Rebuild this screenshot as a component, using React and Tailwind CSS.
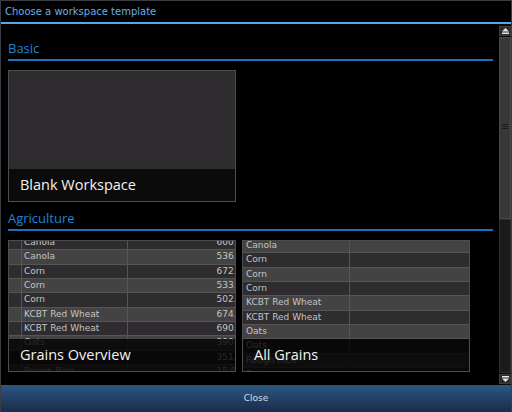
import React from "react";

const dv = { fontFamily: '"DejaVu Sans", Verdana, sans-serif' };
const os = { fontFamily: '"Open Sans", "DejaVu Sans", sans-serif' };

const overviewRows = [
  ["Canola", "600.70"],
  ["Canola", "536.40"],
  ["Corn", "672.25"],
  ["Corn", "533.50"],
  ["Corn", "502.75"],
  ["KCBT Red Wheat", "674.50"],
  ["KCBT Red Wheat", "690.25"],
  ["Oats", "390.50"],
  ["Oats", "351.25"],
  ["Rough Rice", "15.065"],
];

const allRows = [
  "Canola",
  "Corn",
  "Corn",
  "Corn",
  "KCBT Red Wheat",
  "KCBT Red Wheat",
  "Oats",
  "Oats",
  "Rough Rice",
  "Soybeans",
];

function SectionHeading({ children, className }) {
  return (
    <div
      className={`text-[13px] leading-[16px] text-[#2383d6] pb-[3px] border-b-2 border-[#1d6fb8] ${className}`}
      style={os}
    >
      {children}
    </div>
  );
}

function Label({ children, overlay }) {
  return (
    <div
      className={`h-[32px] flex items-center pl-[11px] text-[14.5px] text-[#f2f2f2] ${
        overlay ? "absolute left-0 right-0 bottom-0 bg-black/80" : "bg-[#0b0b0b]"
      }`}
      style={os}
    >
      {children}
    </div>
  );
}

function OverviewCard() {
  return (
    <div className="relative w-[228px] h-[132px] border border-[#4d4d4d] bg-[#2f2c2f] overflow-hidden">
      <div className="mt-[-5px]" style={dv}>
        {overviewRows.map(([name, val], i) => (
          <div
            key={i}
            className={`flex h-[14.33px] border-b border-[#555555] text-[9px] leading-[13px] text-[#c4c4c4] ${
              i % 2 === 0 ? "bg-[#2f2c2f]" : "bg-[#434343]"
            }`}
          >
            <div className="w-[13px] shrink-0 border-r border-[#555555]" />
            <div className="w-[106px] shrink-0 border-r border-[#555555] pl-[2px] whitespace-nowrap">
              {name}
            </div>
            <div className="w-[122px] shrink-0 text-right pr-[2px] whitespace-nowrap">{val}</div>
          </div>
        ))}
      </div>
      <Label overlay>Grains Overview</Label>
    </div>
  );
}

function AllGrainsCard() {
  return (
    <div className="relative w-[228px] h-[132px] border border-[#4d4d4d] bg-[#2f2c2f] overflow-hidden">
      <div className="mt-[-2px]" style={dv}>
        {allRows.map((name, i) => (
          <div
            key={i}
            className={`flex h-[14.33px] border-b border-[#555555] text-[9px] leading-[13px] text-[#c4c4c4] ${
              i % 2 === 0 ? "bg-[#434343]" : "bg-[#2f2c2f]"
            }`}
          >
            <div className="w-[107px] shrink-0 border-r border-[#555555] pl-[3px] whitespace-nowrap">
              {name}
            </div>
            <div className="flex-1" />
          </div>
        ))}
      </div>
      <Label overlay>All Grains</Label>
    </div>
  );
}

function ArrowBtn({ up }) {
  return (
    <div className="h-[10px] bg-[#2b2b2b] border border-[#3c3c3c] flex items-center justify-center">
      <svg width="7" height="6" viewBox="0 0 7 6">
        {up ? (
          <>
            <path d="M3.5 0 L7 3.5 L0 3.5 Z" fill="#e8e8e8" />
            <rect x="0" y="4.5" width="7" height="1.5" fill="#e8e8e8" />
          </>
        ) : (
          <>
            <rect x="0" y="0" width="7" height="1.5" fill="#e8e8e8" />
            <path d="M0 2.5 L7 2.5 L3.5 6 Z" fill="#e8e8e8" />
          </>
        )}
      </svg>
    </div>
  );
}

function Scrollbar() {
  return (
    <div className="w-[12px] shrink-0 flex flex-col pt-[2px] pb-[1px] bg-[#0a0a0a]">
      <ArrowBtn up />
      <div className="mt-[1px] h-[182px] bg-[#383838] border border-[#474747] flex items-center justify-center">
        <div className="flex flex-col gap-[1px] mt-[-4px]">
          <div className="w-[6px] h-[1px] bg-[#1c1c1c]" />
          <div className="w-[6px] h-[1px] bg-[#1c1c1c]" />
          <div className="w-[6px] h-[1px] bg-[#1c1c1c]" />
        </div>
      </div>
      <div className="flex-1 mb-[1px] bg-[#1b1b1b] border border-[#2e2e2e]" />
      <ArrowBtn />
    </div>
  );
}

export default function App() {
  return (
    <div className="w-[512px] h-[412px] bg-black flex flex-col border-t border-l border-r border-[#3a3e44] overflow-hidden">
      <div
        className="h-[21px] shrink-0 flex items-center pl-[4px] text-[10px] text-[#6aaee2]"
        style={dv}
      >
        Choose a workspace template
      </div>
      <div className="h-[2px] shrink-0 bg-[#5aa7e2]" />
      <div className="flex-1 flex min-h-0">
        <div className="flex-1 pl-[7px] pr-[6px] pt-[16px] overflow-hidden">
          <SectionHeading>Basic</SectionHeading>
          <div className="mt-[9px] w-[228px] h-[132px] border border-[#4d4d4d] bg-[#2f2c30] flex flex-col">
            <div className="flex-1" />
            <Label>Blank Workspace</Label>
          </div>
          <SectionHeading className="mt-[8px]">Agriculture</SectionHeading>
          <div className="mt-[9px] flex gap-[6px]">
            <OverviewCard />
            <AllGrainsCard />
          </div>
        </div>
        <Scrollbar />
      </div>
      <div
        className="h-[27px] shrink-0 flex items-center justify-center text-[9px] text-[#d4dcea] bg-gradient-to-b from-[#2c5782] to-[#1a2c4c]"
        style={dv}
      >
        Close
      </div>
    </div>
  );
}
